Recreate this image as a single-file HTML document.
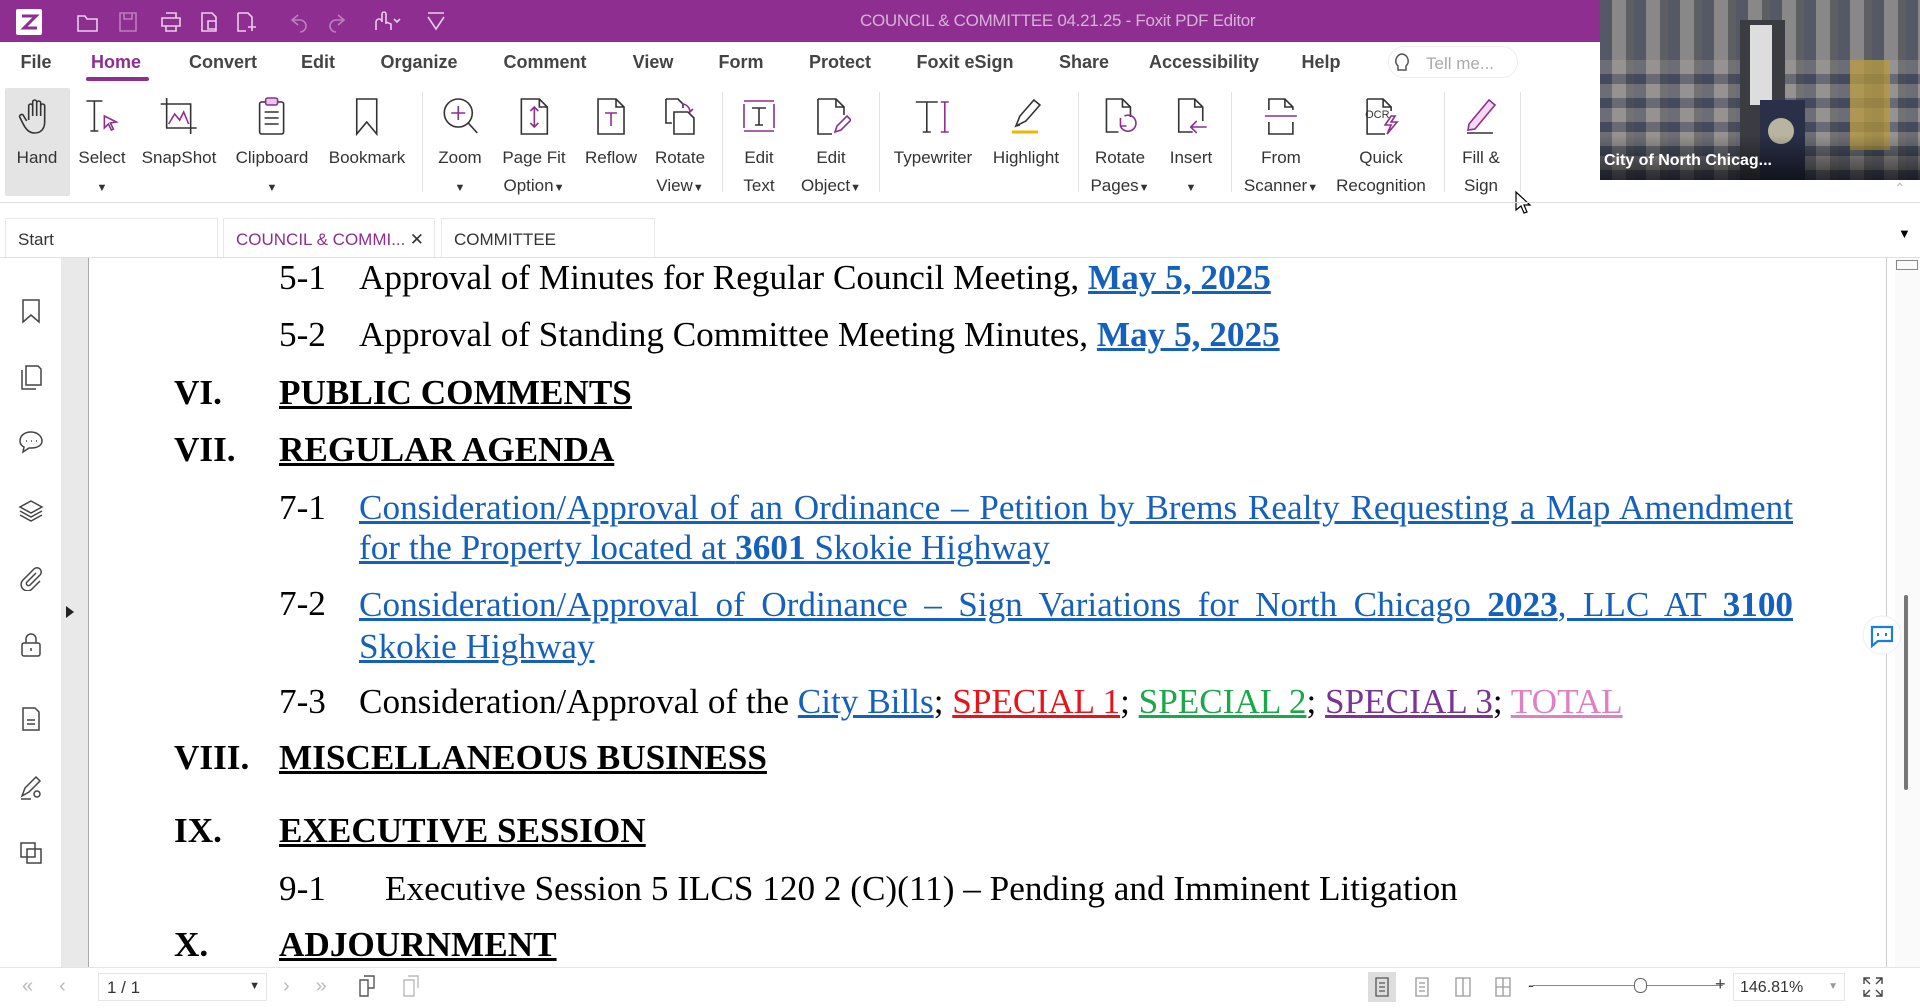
<!DOCTYPE html>
<html><head><meta charset="utf-8"><style>
*{margin:0;padding:0;box-sizing:border-box}
body{width:1920px;height:1008px;overflow:hidden;background:#fff;font-family:"Liberation Sans",sans-serif;position:relative}
.abs{position:absolute}
#title{left:0;top:0;width:1600px;height:42px;background:#8e2e91}
#title .t{position:absolute;left:860px;top:11px;color:#d7b2d8;font-size:17px;letter-spacing:-0.3px}
.menu{position:absolute;top:52px;font-size:18px;font-weight:bold;color:#444;transform:translateX(-50%);white-space:nowrap}
.rb{position:absolute;top:96px;transform:translateX(-50%);text-align:center;font-size:17px;color:#333;line-height:28px;white-space:nowrap}
.rb svg{display:block;margin:0 auto 8px;width:40px;height:40px}
.sep{position:absolute;top:92px;width:1px;height:100px;background:#e2e2e2}
.tab{position:absolute;top:218px;height:40px;border:1px solid #e8e8e8;border-bottom:none;font-size:17px;padding:11px 12px;color:#333;background:#fff}
.doc{position:absolute;font-family:"Liberation Serif",serif;font-size:35.2px;color:#000;white-space:nowrap}
.h{font-weight:bold;text-decoration:underline;text-decoration-thickness:3px}
a{color:#1560bd;text-decoration:underline}
.side svg{position:absolute;left:18px;width:26px;height:26px}
</style></head><body>
<div id="title" class="abs">
<svg class="abs" style="left:16px;top:9px" width="26" height="26"><rect width="26" height="26" rx="2" fill="#fff"/><path d="M6 7h14L8 19h13" stroke="#8e2e91" stroke-width="3" fill="none"/></svg>
<svg class="abs" style="left:76px;top:10px" width="400" height="24" fill="none" stroke="#e8cfe9" stroke-width="1.6">
<path d="M2 6h7l2 3h10v12H2z"/><path d="M44 3h16v18H44z M48 3v6h8V3" opacity=".5"/><path d="M86 8h18v8H86z M90 3h10v5 M90 16v5h10v-5"/><path d="M126 3h10l4 4v14h-14z M132 11h8v8h-8z"/><path d="M162 3h10l4 4v10 M162 3v18h8 M172 17h8 M176 13v8" /><path d="M222 5l-6 5 6 5 M216 10h8a6 6 0 010 12" opacity=".5"/><path d="M262 5l6 5-6 5 M268 10h-8a6 6 0 000 12" opacity=".5"/><path d="M300 20v-8a3 3 0 016 0v-8a2 2 0 014 0v10 M310 12l5 2v6"/><path d="M318 9l3 3 3-3"/><path d="M352 3h16 M352 7l8 12 8-12"/></svg>
<div class="t">COUNCIL &amp; COMMITTEE 04.21.25 - Foxit PDF Editor</div>
</div>
<!-- video -->
<div class="abs" style="left:1600px;top:0;width:320px;height:180px;background:#6d6e72;overflow:hidden">
<div class="abs" style="left:0;top:0;width:320px;height:180px;background:repeating-linear-gradient(90deg,rgba(40,50,80,.35) 0 12px,rgba(220,210,200,.25) 12px 26px,rgba(60,60,60,.3) 26px 34px)"></div>
<div class="abs" style="left:0;top:60px;width:320px;height:120px;background:repeating-linear-gradient(0deg,rgba(30,40,70,.3) 0 10px,rgba(200,190,180,.2) 10px 24px)"></div>
<div class="abs" style="left:140px;top:20px;width:45px;height:160px;background:#3a3c42"></div>
<div class="abs" style="left:150px;top:25px;width:22px;height:80px;background:#ddd"></div>
<div class="abs" style="left:160px;top:100px;width:45px;height:80px;background:#2a3048"></div>
<div class="abs" style="left:168px;top:118px;width:26px;height:26px;border-radius:50%;background:#b9b4a0"></div>
<div class="abs" style="left:250px;top:60px;width:40px;height:90px;background:#b89a3a;opacity:.7"></div>
<div class="abs" style="left:0;top:135px;width:320px;height:45px;background:linear-gradient(transparent,rgba(0,0,0,.6))"></div>
<div class="abs" style="left:4px;top:152px;color:#fff;font-weight:bold;font-size:16px">City of North Chicag...</div>
</div>
<!-- menu -->
<div class="menu" style="left:36px">File</div>
<div class="menu" style="left:116px;color:#8e2e91">Home</div>
<div class="abs" style="left:86px;top:77px;width:63px;height:4px;border-radius:2px;background:#8e2e91"></div>
<div class="menu" style="left:223px">Convert</div>
<div class="menu" style="left:318px">Edit</div>
<div class="menu" style="left:419px">Organize</div>
<div class="menu" style="left:545px">Comment</div>
<div class="menu" style="left:653px">View</div>
<div class="menu" style="left:741px">Form</div>
<div class="menu" style="left:840px">Protect</div>
<div class="menu" style="left:965px">Foxit eSign</div>
<div class="menu" style="left:1084px">Share</div>
<div class="menu" style="left:1204px">Accessibility</div>
<div class="menu" style="left:1321px">Help</div>
<div class="abs" style="left:1388px;top:46px;width:130px;height:32px;border:1px solid #eee;border-radius:16px;background:#fff"></div>
<svg class="abs" style="left:1392px;top:52px" width="20" height="22" fill="none" stroke="#555" stroke-width="1.5"><path d="M10 2a7 7 0 00-4 12v4h8v-4a7 7 0 00-4-12z"/></svg>
<div class="abs" style="left:1426px;top:54px;color:#aaa;font-size:17px">Tell me...</div>
<!-- ribbon -->
<div class="abs" style="left:5px;top:88px;width:65px;height:108px;background:#e4e4e4;border-radius:2px"></div>
<div class="rb" style="left:37px"><svg viewBox="0 0 40 40" fill="none" stroke="#333" stroke-width="1.6"><path d="M12 24V10a2 2 0 014 0v10V6a2 2 0 014 0v14V7a2 2 0 014 0v13V10a2 2 0 014 0v16c0 7-4 11-10 11s-9-4-12-10l-3-6a2 2 0 014-1l3 5"/></svg>Hand</div>
<div class="rb" style="left:102px"><svg viewBox="0 0 40 40" fill="none" stroke="#333" stroke-width="1.6"><path d="M4 5h16 M12 5v30 M8 35h8"/><path d="M22 20l12 6-6 1 3 6-2 1-3-6-4 4z" stroke="#8e2e91"/></svg>Select<br><span style="font-size:11px">▼</span></div>
<div class="rb" style="left:179px"><svg viewBox="0 0 40 40" fill="none" stroke="#333" stroke-width="1.6"><path d="M8 2v30h30 M2 8h30v30"/><path d="M10 28l6-10 5 6 4-8 5 12" stroke="#8e2e91"/></svg>SnapShot</div>
<div class="rb" style="left:272px"><svg viewBox="0 0 40 40" fill="none" stroke="#333" stroke-width="1.6"><rect x="8" y="6" width="24" height="32" rx="2"/><rect x="14" y="2" width="12" height="7" rx="2" fill="#e8c8ea" stroke="#8e2e91"/><path d="M13 16h14M13 22h14M13 28h14"/></svg>Clipboard<br><span style="font-size:11px">▼</span></div>
<div class="rb" style="left:367px"><svg viewBox="0 0 40 40" fill="none" stroke="#333" stroke-width="1.6"><path d="M10 3h20v35l-10-12-10 12z"/></svg>Bookmark</div>
<div class="sep" style="left:422px"></div>
<div class="rb" style="left:460px"><svg viewBox="0 0 40 40" fill="none" stroke="#333" stroke-width="1.6"><circle cx="18" cy="17" r="14"/><path d="M28 27l9 10"/><path d="M18 10v14M11 17h14" stroke="#8e2e91"/></svg>Zoom<br><span style="font-size:11px">▼</span></div>
<div class="rb" style="left:534px"><svg viewBox="0 0 40 40" fill="none" stroke="#333" stroke-width="1.6"><path d="M7 3h18l8 8v27H7z M25 3v8h8"/><path d="M20 12v18M16 15l4-4 4 4M16 27l4 4 4-4" stroke="#8e2e91"/></svg>Page Fit<br>Option<span style="font-size:11px">▼</span></div>
<div class="rb" style="left:611px"><svg viewBox="0 0 40 40" fill="none" stroke="#333" stroke-width="1.6"><path d="M7 3h18l8 8v27H7z M25 3v8h8"/><path d="M14 17h12M20 17v13" stroke="#8e2e91"/></svg>Reflow</div>
<div class="rb" style="left:680px"><svg viewBox="0 0 40 40" fill="none" stroke="#333" stroke-width="1.6"><path d="M6 3h12l5 5v4 M6 3v24h6 M14 16h14l6 6v16H14z"/><path d="M22 8a8 8 0 018 8l3-3" stroke="#8e2e91"/></svg>Rotate<br>View<span style="font-size:11px">▼</span></div>
<div class="sep" style="left:722px"></div>
<div class="rb" style="left:759px"><svg viewBox="0 0 40 40" fill="none" stroke="#8e2e91" stroke-width="1.6"><path d="M5 5h30M5 35h30M5 8v24M35 8v24"/><path d="M13 12h14M20 12v17M16 29h8" stroke="#333"/></svg>Edit<br>Text</div>
<div class="rb" style="left:831px"><svg viewBox="0 0 40 40" fill="none" stroke="#333" stroke-width="1.6"><path d="M7 3h18l8 8v8 M7 3v35h14 M25 3v8h8"/><path d="M24 36l2-6 10-10 4 4-10 10z" stroke="#8e2e91"/></svg>Edit<br>Object<span style="font-size:11px">▼</span></div>
<div class="sep" style="left:879px"></div>
<div class="rb" style="left:933px"><svg viewBox="0 0 40 40" fill="none" stroke="#333" stroke-width="1.6"><path d="M3 6h22M14 6v30M10 36h8"/><path d="M32 6v30M28 6h8M28 36h8" stroke="#8e2e91"/></svg>Typewriter</div>
<div class="rb" style="left:1026px"><svg viewBox="0 0 40 40" fill="none" stroke="#333" stroke-width="1.6"><path d="M10 30l4-10 14-16 6 5-14 16z M10 30l4-1"/><path d="M6 36h26" stroke="#f0b400" stroke-width="3"/></svg>Highlight</div>
<div class="sep" style="left:1078px"></div>
<div class="rb" style="left:1120px"><svg viewBox="0 0 40 40" fill="none" stroke="#333" stroke-width="1.6"><path d="M18 36H6V3h16l8 8v10 M22 3v8h8"/><path d="M24 20a8 8 0 11-4 10M20 22v8h6" stroke="#8e2e91"/></svg>Rotate<br>Pages<span style="font-size:11px">▼</span></div>
<div class="rb" style="left:1191px"><svg viewBox="0 0 40 40" fill="none" stroke="#333" stroke-width="1.6"><path d="M22 36H8V3h16l8 8v14 M24 3v8h8"/><path d="M36 31H20M26 25l-6 6 6 6" stroke="#8e2e91"/></svg>Insert<br><span style="font-size:11px">▼</span></div>
<div class="sep" style="left:1231px"></div>
<div class="rb" style="left:1281px"><svg viewBox="0 0 40 40" fill="none" stroke="#333" stroke-width="1.6"><path d="M8 14V3h16l8 8v3 M24 3v8h8 M8 26v12h24V26"/><path d="M4 20h32" stroke="#8e2e91"/></svg>From<br>Scanner<span style="font-size:11px">▼</span></div>
<div class="rb" style="left:1381px"><svg viewBox="0 0 40 40" fill="none" stroke="#333" stroke-width="1.6"><path d="M6 3h16l8 8v4 M6 3v35h18 M22 3v8h8"/><text x="4" y="22" font-size="11" font-family="Liberation Sans" fill="#333" stroke="none">OCR</text><path d="M30 20l-6 9h6l-4 9 10-12h-6l4-6z" stroke="#8e2e91"/></svg>Quick<br>Recognition</div>
<div class="sep" style="left:1444px"></div>
<div class="rb" style="left:1481px"><svg viewBox="0 0 40 40" fill="none" stroke="#8e2e91" stroke-width="1.6"><path d="M8 28l20-24 6 5-20 24-7 1z" fill="#f3d9f4"/><path d="M6 37h26" stroke="#333"/></svg>Fill &amp;<br>Sign</div>
<div class="sep" style="left:1520px"></div>
<svg class="abs" style="left:1514px;top:190px" width="20" height="26"><path d="M2 2v18l5-4 3 7 3-1-3-7h6z" fill="#fff" stroke="#000" stroke-width="1.2"/></svg>
<div class="abs" style="left:1894px;top:180px;color:#bbb;font-size:14px">&#8963;</div>
<div class="abs" style="left:0;top:202px;width:1920px;height:1px;background:#ddd"></div>
<!-- tabs -->
<div class="tab" style="left:5px;width:213px">Start</div>
<div class="tab" style="left:223px;width:212px;color:#8e2e91">COUNCIL &amp; COMMI...<span style="position:absolute;right:10px;color:#333">✕</span></div>
<div class="tab" style="left:441px;width:214px">COMMITTEE</div>
<div class="abs" style="left:1898px;top:226px;font-size:13px">▼</div>
<div class="abs" style="left:0;top:257px;width:1920px;height:1px;background:#e0e0e0"></div>
<!-- doc area -->
<div class="abs" style="left:61px;top:258px;width:27px;height:709px;background:#e9e9e9"></div>
<div class="abs" style="left:88px;top:258px;width:1px;height:709px;background:#aaa"></div>
<div class="abs" style="left:1886px;top:258px;width:1px;height:709px;background:#ccc"></div>
<div class="abs" style="left:1895px;top:258px;width:25px;height:709px;background:#fafafa"></div>
<div class="abs" style="left:1896px;top:260px;width:22px;height:10px;border:1px solid #888"></div>
<div class="abs" style="left:1904px;top:595px;width:4px;height:195px;background:#777;border-radius:2px"></div>
<svg class="abs" style="left:1862px;top:615px" width="40" height="40"><circle cx="20" cy="20" r="19" fill="#fff" stroke="#eee"/><path d="M10 12h20v14H16l-6 5z" fill="none" stroke="#1a7ee0" stroke-width="2.2"/><path d="M16 18v3M24 18v3" stroke="#1a7ee0" stroke-width="2"/></svg>
<svg class="abs" style="left:64px;top:604px" width="12" height="16"><path d="M2 2l8 6-8 6z" fill="#222"/></svg>
<div class="side">
<svg style="top:298px" viewBox="0 0 26 26" fill="none" stroke="#444" stroke-width="1.5"><path d="M5 2h16v22l-8-7-8 7z"/></svg>
<svg style="top:364px" viewBox="0 0 26 26" fill="none" stroke="#444" stroke-width="1.5"><path d="M8 2h12l3 3v16H8z M4 6v19h14"/></svg>
<svg style="top:429px" viewBox="0 0 26 26" fill="none" stroke="#444" stroke-width="1.5"><path d="M13 3C6 3 2 7 2 12c0 3 2 5 4 6l-1 5 6-4h2c7 0 11-3 11-7S20 3 13 3z"/><path d="M8 12h1M13 12h1M18 12h1"/></svg>
<svg style="top:498px" viewBox="0 0 26 26" fill="none" stroke="#444" stroke-width="1.5"><path d="M13 3l11 6-11 6-11-6z M2 13l11 6 11-6 M2 17l11 6 11-6"/></svg>
<svg style="top:565px" viewBox="0 0 26 26" fill="none" stroke="#444" stroke-width="1.5"><path d="M18 8l-9 9a2 2 0 003 3l10-10a4 4 0 00-6-6L5 15a6 6 0 009 9l8-8"/></svg>
<svg style="top:632px" viewBox="0 0 26 26" fill="none" stroke="#444" stroke-width="1.5"><rect x="4" y="11" width="18" height="13" rx="2"/><path d="M8 11V7a5 5 0 0110 0v4 M13 16v3"/></svg>
<svg style="top:706px" viewBox="0 0 26 26" fill="none" stroke="#444" stroke-width="1.5"><path d="M5 2h12l4 4v18H5z M9 14h8M9 18h8"/></svg>
<svg style="top:774px" viewBox="0 0 26 26" fill="none" stroke="#444" stroke-width="1.5"><path d="M4 22l3-8L18 3l4 4L11 18z M3 25h10"/><circle cx="19" cy="20" r="3"/></svg>
<svg style="top:840px" viewBox="0 0 26 26" fill="none" stroke="#444" stroke-width="1.5"><path d="M3 3h14v14H3z M9 9h14v14H9z"/></svg>
</div>
<!-- document text -->
<div class="doc" style="left:279px;top:258px">5-1</div>
<div class="doc" style="left:359px;top:258px">Approval of Minutes for Regular Council Meeting, <a style="font-weight:bold">May 5, 2025</a></div>
<div class="doc" style="left:279px;top:315px">5-2</div>
<div class="doc" style="left:359px;top:315px">Approval of Standing Committee Meeting Minutes, <a style="font-weight:bold">May 5, 2025</a></div>
<div class="doc" style="left:174px;top:373px;font-weight:bold">VI.</div>
<div class="doc h" style="left:279px;top:373px">PUBLIC COMMENTS</div>
<div class="doc" style="left:174px;top:430px;font-weight:bold">VII.</div>
<div class="doc h" style="left:279px;top:430px">REGULAR AGENDA</div>
<div class="doc" style="left:279px;top:488px">7-1</div>
<div class="doc" style="left:359px;top:488px;width:1434px;white-space:normal;text-align:justify;text-align-last:left;line-height:40px"><a>Consideration/Approval of an Ordinance – Petition by Brems Realty Requesting a Map Amendment for the Property located at <b>3601</b> Skokie Highway</a></div>
<div class="doc" style="left:279px;top:584px">7-2</div>
<div class="doc" style="left:359px;top:584px;width:1434px;white-space:normal;text-align:justify;text-align-last:left;line-height:42px"><a>Consideration/Approval of Ordinance – Sign Variations for North Chicago <b>2023</b>, LLC AT <b>3100</b> Skokie Highway</a></div>
<div class="doc" style="left:279px;top:682px">7-3</div>
<div class="doc" style="left:359px;top:682px">Consideration/Approval of the <a>City Bills</a>; <a style="color:#e8141b">SPECIAL 1</a>; <a style="color:#1aa84a">SPECIAL 2</a>; <a style="color:#7a3494">SPECIAL 3</a>; <a style="color:#e17fc3">TOTAL</a></div>
<div class="doc" style="left:174px;top:738px;font-weight:bold">VIII.</div>
<div class="doc h" style="left:279px;top:738px">MISCELLANEOUS BUSINESS</div>
<div class="doc" style="left:174px;top:811px;font-weight:bold">IX.</div>
<div class="doc h" style="left:279px;top:811px">EXECUTIVE SESSION</div>
<div class="doc" style="left:279px;top:869px">9-1</div>
<div class="doc" style="left:385px;top:869px">Executive Session 5 ILCS 120 2 (C)(11) – Pending and Imminent Litigation</div>
<div class="doc" style="left:174px;top:925px;font-weight:bold">X.</div>
<div class="doc h" style="left:279px;top:925px">ADJOURNMENT</div>
<!-- status bar -->
<div class="abs" style="left:0;top:967px;width:1920px;height:41px;background:#fff;border-top:1px solid #e4e4e4"></div>
<div class="abs" style="left:22px;top:975px;color:#bbb;font-size:20px;letter-spacing:26px">«‹</div>
<div class="abs" style="left:98px;top:973px;width:169px;height:28px;border:1px solid #e6e6e6;font-size:17px;padding:4px 8px;color:#333">1 / 1<span style="position:absolute;right:6px;top:6px;font-size:11px">▼</span></div>
<div class="abs" style="left:283px;top:975px;color:#bbb;font-size:20px;letter-spacing:26px">›»</div>
<svg class="abs" style="left:358px;top:974px" width="70" height="26" fill="none" stroke="#555" stroke-width="1.4"><path d="M2 6h8v16H2z M6 2h10v12h-6"/><path d="M46 6h10v16H46z M50 2h10v12" stroke="#bbb"/></svg>
<div class="abs" style="left:1368px;top:972px;width:28px;height:30px;background:#ddd"></div>
<svg class="abs" style="left:1372px;top:975px" width="140" height="24" fill="none" stroke="#555" stroke-width="1.3"><path d="M4 3h12v18H4z M7 8h6M7 12h6M7 16h6"/><path d="M44 3h12v18H44z M47 8h6M47 12h6M47 16h6 M84 3h14v18H84z M91 3v18 M124 3h14v18h-14z M131 3v18 M124 12h14" stroke="#999"/></svg>
<div class="abs" style="left:1533px;top:985px;width:190px;height:1px;background:#888"></div>
<div class="abs" style="left:1528px;top:975px;font-size:18px;color:#444">-</div>
<div class="abs" style="left:1715px;top:974px;font-size:18px;color:#444">+</div>
<div class="abs" style="left:1634px;top:978px;width:13px;height:15px;border:1px solid #666;border-radius:6px;background:#fff"></div>
<div class="abs" style="left:1733px;top:973px;width:112px;height:28px;border:1px solid #e6e6e6;font-size:16px;padding:5px 6px;color:#333">146.81%<span style="position:absolute;right:6px;top:7px;font-size:10px;color:#999">▼</span></div>
<svg class="abs" style="left:1862px;top:976px" width="22" height="22" fill="none" stroke="#444" stroke-width="1.4"><path d="M2 8V2h6M14 2h6v6M20 14v6h-6M8 20H2v-6M2 2l6 6M20 2l-6 6M20 20l-6-6M2 20l6-6"/></svg>
</body></html>
